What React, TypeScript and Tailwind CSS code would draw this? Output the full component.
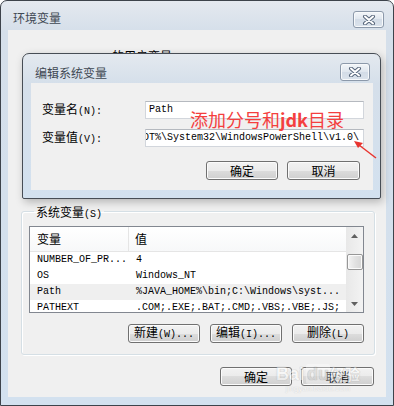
import React from "react";

const CJK = "font-['Noto_Sans_CJK_SC',sans-serif] text-[12px] leading-[14px]";
const MONO = "font-['Liberation_Mono',monospace] text-[10px] leading-[14px]";

const Btn: React.FC<{ w: string; children: React.ReactNode }> = ({ w, children }) => (
  <div
    className={`${w} h-[19px] flex items-center justify-center rounded-[3px] border border-[#707070] bg-[linear-gradient(#f2f2f2,#ebebeb_50%,#dddddd_50%,#cfcfcf)] shadow-[inset_0_0_0_1px_#fbfbfb] text-black`}
  >
    {children}
  </div>
);

const CloseBtn: React.FC<{ w: string; h: string }> = ({ w, h }) => (
  <div
    className={`${w} ${h} flex items-center justify-center rounded-[3px] border border-[#8c99aa] bg-[linear-gradient(#f3f6f9,#dfe6ee_50%,#d3dce7_50%,#dbe3ec)] shadow-[inset_0_0_0_1px_#f7f9fb]`}
  >
    <svg width="14" height="10" viewBox="0 0 14 10">
      <path d="M3 1.5 L11 8.5 M11 1.5 L3 8.5" stroke="#56657a" strokeWidth="4" strokeLinecap="round" />
      <path d="M3 1.5 L11 8.5 M11 1.5 L3 8.5" stroke="#ffffff" strokeWidth="2" strokeLinecap="round" />
    </svg>
  </div>
);

const rows = [
  { name: "NUMBER_OF_PR...", value: "4" },
  { name: "OS", value: "Windows_NT" },
  { name: "Path", value: "%JAVA_HOME%\\bin;C:\\Windows\\syst...", hover: true },
  { name: "PATHEXT", value: ".COM;.EXE;.BAT;.CMD;.VBS;.VBE;.JS;" },
];

export default function App() {
  return (
    <div className="relative w-[394px] h-[406px] overflow-hidden bg-white">
      {/* 环境变量 window */}
      <div className="w-[394px] h-[406px] flex flex-col border border-[#3d434b] rounded-t-[7px] bg-[linear-gradient(#e4e9ef,#d5dfea_30px,#d3e1ef)]">
        <div className="h-[29px] flex justify-between pl-[12px] pr-[9px]">
          <span className={`${CJK} pt-[10px] text-[#3f4853]`}>环境变量</span>
          <div className="pt-[10px]">
            <CloseBtn w="w-[31px]" h="h-[17px]" />
          </div>
        </div>

        <div className="mx-[7px] h-[367px] flex flex-col bg-[#f0f0f0]">
          {/* user variables, hidden under the edit dialog */}
          <div className="h-[169px] shrink-0 pl-[20px] pt-[13px]">
            <span className={CJK}>
              <span className={MONO}>Administrator </span>的用户变量<span className={MONO}>(U)</span>
            </span>
          </div>

          {/* 系统变量 */}
          <fieldset className="ml-[13px] mr-[11px] border border-[#d5dfe5] rounded-[3px] shadow-[inset_1px_1px_0_#ffffff,1px_1px_0_#ffffff] pl-[7px] pr-[10px] pb-[11px]">
            <legend className="ml-[5px] px-[2px]">
              <span className={CJK}>
                系统变量<span className={MONO}>(S)</span>
              </span>
            </legend>

            <div className="mt-[3px] h-[87px] flex border border-[#828790] bg-white overflow-hidden">
              <div className="flex-1 flex flex-col">
                <div className="h-[25px] shrink-0 flex border-b border-[#e5e5e5] bg-[linear-gradient(#ffffff,#f7f8f9)]">
                  <div className={`${CJK} w-[99px] flex items-center pl-[7px] border-r border-[#e5e5e5]`}>变量</div>
                  <div className={`${CJK} flex items-center pl-[6px]`}>值</div>
                </div>
                {rows.map((r) => (
                  <div
                    key={r.name}
                    className={`h-[16px] shrink-0 flex items-center ${MONO} text-black ${r.hover ? "bg-[#efefef]" : ""}`}
                  >
                    <div className="w-[99px] pl-[7px] whitespace-nowrap overflow-hidden">{r.name}</div>
                    <div className="pl-[7px] whitespace-nowrap overflow-hidden">{r.value}</div>
                  </div>
                ))}
              </div>
              <div className="w-[17px] flex flex-col items-center bg-[linear-gradient(90deg,#e8e8e8,#f3f3f3)]">
                <div className="h-[17px] flex items-center justify-center">
                  <svg width="7" height="4" viewBox="0 0 7 4">
                    <path d="M0 4 L3.5 0 L7 4 Z" fill="#606060" />
                  </svg>
                </div>
                <div className="mt-[10px] w-[16px] h-[16px] rounded-[2px] border border-[#979797] bg-[linear-gradient(90deg,#f4f4f4,#e2e2e2_50%,#d6d6d6)] shadow-[inset_0_0_0_1px_#fbfbfb]" />
                <div className="flex-1" />
                <div className="h-[17px] flex items-center justify-center">
                  <svg width="7" height="4" viewBox="0 0 7 4">
                    <path d="M0 0 L3.5 4 L7 0 Z" fill="#606060" />
                  </svg>
                </div>
              </div>
            </div>

            <div className="mt-[11px] flex justify-end gap-[10px]">
              <Btn w="w-[72px]">
                <span className={CJK}>
                  新建<span className={MONO}>(W)...</span>
                </span>
              </Btn>
              <Btn w="w-[72px]">
                <span className={CJK}>
                  编辑<span className={MONO}>(I)...</span>
                </span>
              </Btn>
              <Btn w="w-[72px]">
                <span className={CJK}>
                  删除<span className={MONO}>(L)</span>
                </span>
              </Btn>
            </div>
          </fieldset>

          <div className="mt-[12px] mr-[12px] flex justify-end gap-[9px]">
            <Btn w="w-[72px]">
              <span className={CJK}>确定</span>
            </Btn>
            <Btn w="w-[73px]">
              <span className={CJK}>取消</span>
            </Btn>
          </div>
        </div>
      </div>

      {/* 编辑系统变量 dialog */}
      <div className="absolute left-[22px] top-[53px] w-[359px] h-[146px] flex flex-col border border-[#474d55] rounded-t-[7px] rounded-b-[2px] bg-[linear-gradient(#e4e9ef,#d5dfea_30px,#d3e1ef)] shadow-[2px_3px_8px_rgba(0,0,0,0.25)]">
        <div className="h-[29px] flex justify-between pl-[12px] pr-[10px]">
          <span className={`${CJK} pt-[12px] text-[#3f4853]`}>编辑系统变量</span>
          <div className="pt-[9px]">
            <CloseBtn w="w-[30px]" h="h-[18px]" />
          </div>
        </div>
        <div className="ml-[8px] mr-[7px] h-[107px] flex flex-col bg-[#f0f0f0]">
          <div className="mt-[18px] flex items-center pl-[11px] pr-[9px]">
            <span className={`${CJK} flex-1`}>
              变量名<span className={MONO}>(N):</span>
            </span>
            <div className={`w-[219px] h-[18px] flex items-center pl-[3px] bg-white border border-[#d2d6dc] border-t-[#b5b9bf] ${MONO}`}>
              Path
            </div>
          </div>
          <div className="mt-[10px] flex items-center pl-[11px] pr-[9px]">
            <span className={`${CJK} flex-1`}>
              变量值<span className={MONO}>(V):</span>
            </span>
            <div className={`w-[219px] h-[18px] flex items-center justify-end pr-[4px] overflow-hidden bg-white border border-[#d2d6dc] border-t-[#b5b9bf] ${MONO}`}>
              <span className="shrink-0 whitespace-nowrap">%SYSTEMROOT%\System32\WindowsPowerShell\v1.0\</span>
            </div>
          </div>
          <div className="mt-[14px] mr-[13px] flex justify-end gap-[9px]">
            <Btn w="w-[72px]">
              <span className={CJK}>确定</span>
            </Btn>
            <Btn w="w-[73px]">
              <span className={CJK}>取消</span>
            </Btn>
          </div>
        </div>
      </div>

      {/* red annotation */}
      <span className="absolute left-[190px] top-[109px] font-['Noto_Sans_CJK_SC',sans-serif] text-[18px] leading-[20px] text-[#f43f3f] whitespace-nowrap">
        添加分号和<span className="font-bold">jdk</span>目录
      </span>
      <svg className="absolute left-[348px] top-[136px]" width="32" height="26" viewBox="0 0 32 26">
        <path d="M28 22 L11 9" stroke="#e8342f" strokeWidth="1.5" />
        <path d="M6 5 L15 7 L10 12 Z" fill="#e8342f" />
      </svg>

      {/* watermark */}
      <div className="absolute left-[276px] top-[364px] flex flex-col items-center opacity-50 pointer-events-none">
        <div className="flex items-end font-['Liberation_Sans',sans-serif] text-[18px] leading-[20px] font-bold text-white [text-shadow:0_0_1px_#999,0_0_1px_#999]">
          <span>Bai</span>
          <span className="ml-[2px] px-[1px] bg-white/70 text-[#d0d0d0] rounded-[2px]">du</span>
          <span className="font-['Noto_Sans_CJK_SC',sans-serif] text-[15px]">经验</span>
        </div>
        <span className="font-['Liberation_Sans',sans-serif] text-[8px] leading-[9px] text-white [text-shadow:0_0_1px_#999]">jingyan.baidu.com</span>
      </div>
    </div>
  );
}
